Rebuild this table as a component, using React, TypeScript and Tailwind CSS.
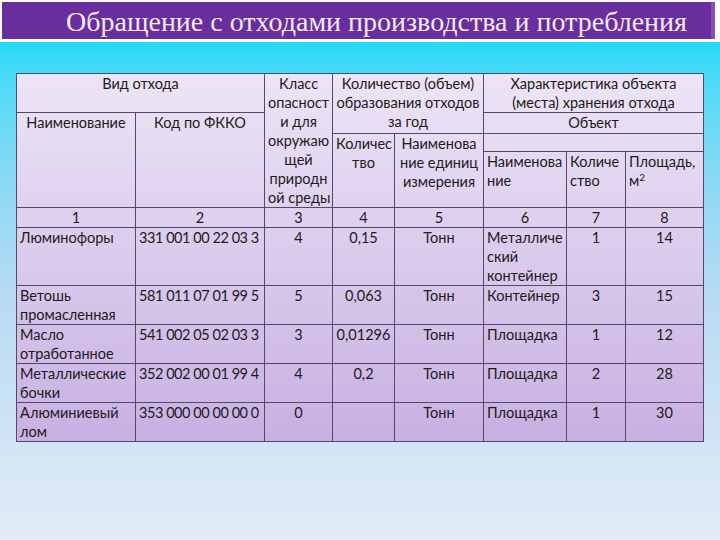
import React from "react";

const B = "border border-[#56486b]";

export default function App() {
  const cell = `${B} align-top px-[3px] leading-[19px] whitespace-nowrap overflow-hidden`;
  const c = `${cell} text-center`;
  const l = `${cell} text-left`;
  const rows = [
    { h: 57, n: ["Люминофоры"], code: "331 001 00 22 03 3", cls: "4", q: "0,15", u: "Тонн", o: ["Металличе", "ский", "контейнер"], k: "1", s: "14" },
    { h: 38, n: ["Ветошь", "промасленная"], code: "581 011 07 01 99 5", cls: "5", q: "0,063", u: "Тонн", o: ["Контейнер"], k: "3", s: "15" },
    { h: 38, n: ["Масло", "отработанное"], code: "541 002 05 02 03 3", cls: "3", q: "0,01296", u: "Тонн", o: ["Площадка"], k: "1", s: "12" },
    { h: 38, n: ["Металлические", "бочки"], code: "352 002 00 01 99 4", cls: "4", q: "0,2", u: "Тонн", o: ["Площадка"], k: "2", s: "28" },
    { h: 38, n: ["Алюминиевый", "лом"], code: "353 000 00 00 00 0", cls: "0", q: "", u: "Тонн", o: ["Площадка"], k: "1", s: "30" },
  ];
  const lines = (a: string[]) =>
    a.map((t, i) => (
      <React.Fragment key={i}>
        {i > 0 && <br />}
        {t}
      </React.Fragment>
    ));
  return (
    <div className="w-[720px] h-[540px] overflow-hidden bg-white flex flex-col" style={{ fontFamily: "Lato, 'Noto Sans', sans-serif" }}>
      <div className="pt-[2px] pl-[2px] pr-[5px] pb-[3px] bg-white">
        <div className="h-[37px] bg-[#6a2d9e] border-r-[4px] border-[#8550b3] flex items-center pl-[64px] pt-[3px]">
          <span className="text-[#f3ecf6] text-[28px] leading-none" style={{ fontFamily: "'Liberation Serif', serif" }}>
            Обращение с отходами производства и потребления
          </span>
        </div>
      </div>
      <div className="flex-1 bg-gradient-to-b from-[#20d9f8] via-[#b6daf2] to-[#e3ebf7] pl-[16px] pt-[31px]">
        <table className="border-collapse table-fixed w-[687px] text-[14.5px] text-[#1c1a20] bg-gradient-to-b from-[#ece5f6] to-[#c8b0e2]">
          <colgroup>
            <col className="w-[119px]" />
            <col className="w-[129px]" />
            <col className="w-[68px]" />
            <col className="w-[62px]" />
            <col className="w-[89px]" />
            <col className="w-[83px]" />
            <col className="w-[59px]" />
            <col className="w-[78px]" />
          </colgroup>
          <tbody>
            <tr className="h-[38px]">
              <td colSpan={2} className={c}>Вид отхода</td>
              <td rowSpan={4} className={`${c} px-0`}>{lines(["Класс", "опасност", "и для", "окружаю", "щей", "природн", "ой среды"])}</td>
              <td colSpan={2} rowSpan={2} className={c}>{lines(["Количество (объем)", "образования отходов", "за год"])}</td>
              <td colSpan={3} className={c}>{lines(["Характеристика объекта", "(места) хранения отхода"])}</td>
            </tr>
            <tr className="h-[19px]">
              <td rowSpan={3} className={c}>Наименование</td>
              <td rowSpan={3} className={c}>Код по ФККО</td>
              <td colSpan={3} className={c}>Объект</td>
            </tr>
            <tr className="h-[18px]">
              <td rowSpan={2} className={c}>{lines(["Количес", "тво"])}</td>
              <td rowSpan={2} className={c}>{lines(["Наименова", "ние единиц", "измерения"])}</td>
              <td colSpan={3} className={c}></td>
            </tr>
            <tr className="h-[56px]">
              <td className={l}>{lines(["Наименова", "ние"])}</td>
              <td className={l}>{lines(["Количе", "ство"])}</td>
              <td className={l}>
                Площадь,
                <br />
                м<sup className="text-[10px]">2</sup>
              </td>
            </tr>
            <tr className="h-[19px]">
              {["1", "2", "3", "4", "5", "6", "7", "8"].map((t) => (
                <td key={t} className={`${c} leading-[17px]`}>{t}</td>
              ))}
            </tr>
            {rows.map((r, i) => (
              <tr key={i} style={{ height: r.h }}>
                <td className={l}>{lines(r.n)}</td>
                <td className={`${l} px-[1px] tracking-[-0.45px]`}>{r.code}</td>
                <td className={c}>{r.cls}</td>
                <td className={c}>{r.q}</td>
                <td className={c}>{r.u}</td>
                <td className={l}>{lines(r.o)}</td>
                <td className={c}>{r.k}</td>
                <td className={c}>{r.s}</td>
              </tr>
            ))}
          </tbody>
        </table>
      </div>
    </div>
  );
}
